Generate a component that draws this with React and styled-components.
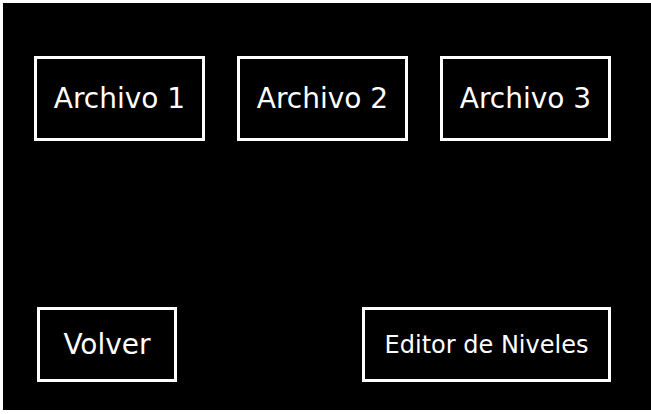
import React from 'react';
import styled, { createGlobalStyle } from 'styled-components';

const GlobalStyle = createGlobalStyle`
  html, body {
    margin: 0;
    padding: 0;
    background-color: #ffffff;
  }
  * {
    box-sizing: border-box;
  }
`;

const Screen = styled.main`
  margin: 3px 0 0 3px;
  width: 648px;
  height: 407px;
  background-color: #000000;
  display: flex;
  flex-direction: column;
  justify-content: space-between;
  padding: 53px 0 28px 31px;
  font-family: 'DejaVu Sans', 'Liberation Sans', sans-serif;
  color: #ffffff;
`;

const SlotRow = styled.div`
  display: flex;
  gap: 32px;
`;

const BottomRow = styled.div`
  display: flex;
  justify-content: space-between;
  padding: 0 40px 0 3px;
`;

const MenuButton = styled.button`
  width: ${props => props.w}px;
  height: ${props => props.h}px;
  background: transparent;
  border: 3px solid #ffffff;
  color: #ffffff;
  font-family: inherit;
  font-size: ${props => props.size}px;
  display: flex;
  align-items: center;
  justify-content: center;
  padding: 0;
  cursor: pointer;
  white-space: nowrap;
`;

const archivos = ['Archivo 1', 'Archivo 2', 'Archivo 3'];

function App() {
  return (
    <>
      <GlobalStyle />
      <Screen>
        <SlotRow>
          {archivos.map(nombre => (
            <MenuButton key={nombre} w={171} h={85} size={28}>
              {nombre}
            </MenuButton>
          ))}
        </SlotRow>
        <BottomRow>
          <MenuButton w={140} h={75} size={28}>Volver</MenuButton>
          <MenuButton w={249} h={75} size={24}>Editor de Niveles</MenuButton>
        </BottomRow>
      </Screen>
    </>
  );
}

export default App;
